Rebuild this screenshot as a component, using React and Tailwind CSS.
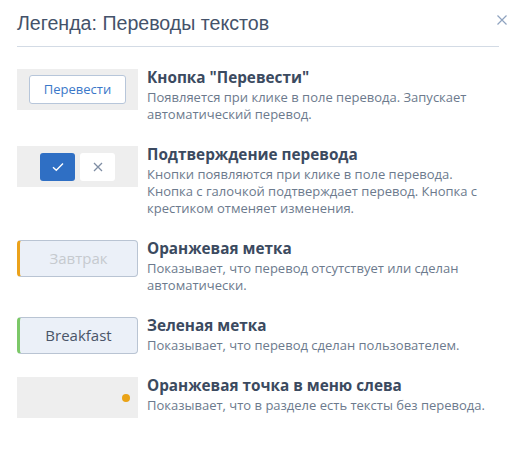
import React from "react";

const items = [
  {
    title: 'Кнопка "Перевести"',
    desc: "Появляется при клике в поле перевода. Запускает автоматический перевод.",
    kind: "translate",
  },
  {
    title: "Подтверждение перевода",
    desc: "Кнопки появляются при клике в поле перевода. Кнопка с галочкой подтверждает перевод. Кнопка с крестиком отменяет изменения.",
    kind: "confirm",
  },
  {
    title: "Оранжевая метка",
    desc: "Показывает, что перевод отсутствует или сделан автоматически.",
    kind: "orange",
  },
  {
    title: "Зеленая метка",
    desc: "Показывает, что перевод сделан пользователем.",
    kind: "green",
  },
  {
    title: "Оранжевая точка в меню слева",
    desc: "Показывает, что в разделе есть тексты без перевода.",
    kind: "dot",
  },
];

function Visual({ kind }) {
  if (kind === "translate") {
    return (
      <div className="w-[121px] h-[41px] bg-[#eeeeee] flex items-center justify-center shrink-0">
        <div className="w-[97px] h-[29px] bg-white border border-[#b7c6da] rounded-[3px] flex items-center justify-center text-[13px] text-[#3a78c9]">
          Перевести
        </div>
      </div>
    );
  }
  if (kind === "confirm") {
    return (
      <div className="w-[121px] h-[41px] bg-[#eeeeee] flex items-center justify-center gap-[5px] shrink-0">
        <div className="w-[35px] h-[28px] bg-[#2f6fc4] rounded-[3px] flex items-center justify-center">
          <svg width="12" height="10" viewBox="0 0 12 10" fill="none">
            <path d="M1 5.2 L4.3 8.3 L11 1.5" stroke="#ffffff" strokeWidth="1.4" />
          </svg>
        </div>
        <div className="w-[35px] h-[28px] bg-white rounded-[3px] flex items-center justify-center">
          <svg width="10" height="10" viewBox="0 0 10 10" fill="none">
            <path d="M1 1 L9 9 M9 1 L1 9" stroke="#7f8ea4" strokeWidth="1.3" />
          </svg>
        </div>
      </div>
    );
  }
  if (kind === "orange" || kind === "green") {
    const orange = kind === "orange";
    return (
      <div
        className={
          "w-[121px] h-[37px] bg-[#ebf0f8] border border-[#b9c4d3] rounded-[4px] border-l-[3px] flex items-center justify-center shrink-0 text-[15px] " +
          (orange
            ? "border-l-[#eba21b] text-[#c6cacf]"
            : "border-l-[#7cc868] text-[#4a5568]")
        }
      >
        {orange ? "Завтрак" : "Breakfast"}
      </div>
    );
  }
  return (
    <div className="w-[121px] h-[41px] bg-[#eeeeee] flex items-center justify-end pr-[8px] shrink-0">
      <div className="w-[8px] h-[8px] rounded-full bg-[#eaa316]" />
    </div>
  );
}

export default function App() {
  return (
    <div className="w-[520px] h-[449px] bg-white relative" style={{ fontFamily: '"Open Sans", sans-serif' }}>
      <div className="px-[17px] pt-[11px]">
        <div
          className="text-[19.6px] leading-[24px] text-[#44526a] pb-[11px] border-b border-[#d3dbe5] mr-[4px]"
          style={{ fontFamily: '"Liberation Sans", Arial, sans-serif' }}
        >
          Легенда: Переводы текстов
        </div>
        <button className="absolute right-[13px] top-[15px] w-[10px] h-[10px]">
          <svg width="10" height="10" viewBox="0 0 10 10" fill="none">
            <path d="M0.5 0.5 L9.5 9.5 M9.5 0.5 L0.5 9.5" stroke="#8fa3bf" strokeWidth="1.2" />
          </svg>
        </button>
        <div className="flex flex-col gap-[23px] pt-[22px]">
          {items.map((it) => (
            <div key={it.title} className="flex gap-[9px] items-start">
              <Visual kind={it.kind} />
              <div className="w-[340px]">
                <div className="text-[15.3px] leading-[16px] font-bold text-[#3b4a60]">{it.title}</div>
                <div className="mt-[4px] text-[13px] leading-[17px] text-[#6c7a8d]">{it.desc}</div>
              </div>
            </div>
          ))}
        </div>
      </div>
    </div>
  );
}
